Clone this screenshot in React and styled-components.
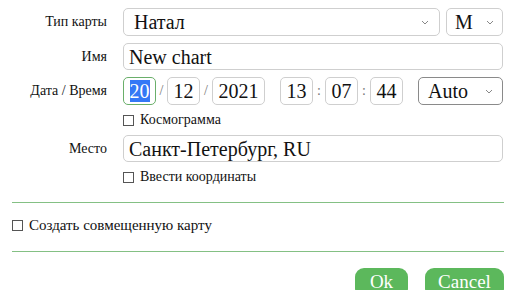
import React from "react"
import styled, { createGlobalStyle } from "styled-components"

const GlobalStyle = createGlobalStyle`
  body {
    margin: 0;
    background: #fff;
    color: #111;
    font-family: "Liberation Serif";
  }
  html body #root * {
    font-family: "Liberation Serif" !important;
  }
`

const Page = styled.div`
  font-family: "Liberation Serif";
  padding: 8px 12px 0 12px;
  width: 492px;
`

const Form = styled.div`
  display: grid;
  grid-template-columns: 95px 380px;
  column-gap: 16px;
  row-gap: 7px;
  align-items: center;
`

const Label = styled.div`
  font-family: "Liberation Serif";
  text-align: right;
  font-size: 14px;
`

const Row = styled.div`
  display: flex;
  align-items: center;
`

const Box = styled.div`
  font-family: "Liberation Serif";
  font-size: 20px;
  box-sizing: border-box;
  height: ${({ $h }) => $h || 28}px;
  width: ${({ $w }) => ($w ? `${$w}px` : "auto")};
  flex: ${({ $w }) => ($w ? "none" : 1)};
  border: 1px solid ${({ $focus, $dark }) => ($focus ? "#6aaf6a" : $dark ? "#8a8a8a" : "#cfcfcf")};
  border-radius: 5px;
  background: #fff;
  line-height: 1;
  display: flex;
  align-items: center;
  justify-content: ${({ $center }) => ($center ? "center" : "flex-start")};
  padding: 0 ${({ $pad }) => $pad ?? 5}px;
`

const Select = styled(Box)`
  justify-content: space-between;
`

const Chevron = () => (
  <svg width="8" height="5" viewBox="0 0 8 5">
    <path d="M1 1l3 3 3-3" fill="none" stroke="#888" strokeWidth="1" />
  </svg>
)

const Selected = styled.span`
  background: #3478f6;
  color: #fff;
  padding: 1px 0;
`

const Sep = styled.span`
  font-family: "Liberation Serif";
  font-size: 14px;
  width: ${({ $w }) => $w}px;
  text-align: center;
  color: #777;
  flex: none;
`

const Gap = styled.span`
  width: ${({ $w }) => $w}px;
  flex: none;
`

const Check = styled.label`
  font-family: "Liberation Serif";
  font-size: ${({ $size }) => $size || 14}px;
  display: flex;
  align-items: center;
  gap: 6px;
  &::before {
    content: "";
    width: 9px;
    height: 9px;
    border: 1px solid #555;
    flex: none;
  }
`

const Empty = styled.div``

const Rule = styled.hr`
  border: none;
  border-top: 1px solid #84c084;
  margin: ${({ $m }) => $m};
`

const Buttons = styled.div`
  display: flex;
  justify-content: flex-end;
  gap: 17px;
`

const Button = styled.button`
  font-family: "Liberation Serif";
  font-size: 19px;
  background: #5cb85c;
  color: #fff;
  border: none;
  border-radius: 9px;
  height: 30px;
  width: ${({ $w }) => $w}px;
  padding: 0 0 4px 0;
  line-height: 1;
`

export default function App() {
  return (
    <Page>
      <GlobalStyle />
      <Form>
        <Label>Тип карты</Label>
        <Row>
          <Select $pad={10}>
            Натал <Chevron />
          </Select>
          <Gap $w={6} />
          <Select $w={57} $pad={8}>
            M <Chevron />
          </Select>
        </Row>

        <Label>Имя</Label>
        <Box $h={27}>New chart</Box>

        <Label>Дата / Время</Label>
        <Row>
          <Box $w={33} $center $focus $pad={0}>
            <Selected>20</Selected>
          </Box>
          <Sep $w={11}>/</Sep>
          <Box $w={33} $center $pad={0}>12</Box>
          <Sep $w={12}>/</Sep>
          <Box $w={53} $center $pad={0}>2021</Box>
          <Gap $w={15} />
          <Box $w={33} $center $pad={0}>13</Box>
          <Sep $w={12}>:</Sep>
          <Box $w={33} $center $pad={0}>07</Box>
          <Sep $w={12}>:</Sep>
          <Box $w={33} $center $pad={0}>44</Box>
          <Gap $w={15} />
          <Select $w={85} $dark $pad={9}>
            Auto <Chevron />
          </Select>
        </Row>

        <Empty />
        <Check>Космограмма</Check>

        <Label>Место</Label>
        <Box $h={27}>Санкт-Петербург, RU</Box>

        <Empty />
        <Check>Ввести координаты</Check>
      </Form>

      <Rule $m="17px 0 14px 0" />
      <Check $size={15}>Создать совмещенную карту</Check>
      <Rule $m="17px 0 16px 0" />

      <Buttons>
        <Button $w={53}>Ok</Button>
        <Button $w={79}>Cancel</Button>
      </Buttons>
    </Page>
  )
}
